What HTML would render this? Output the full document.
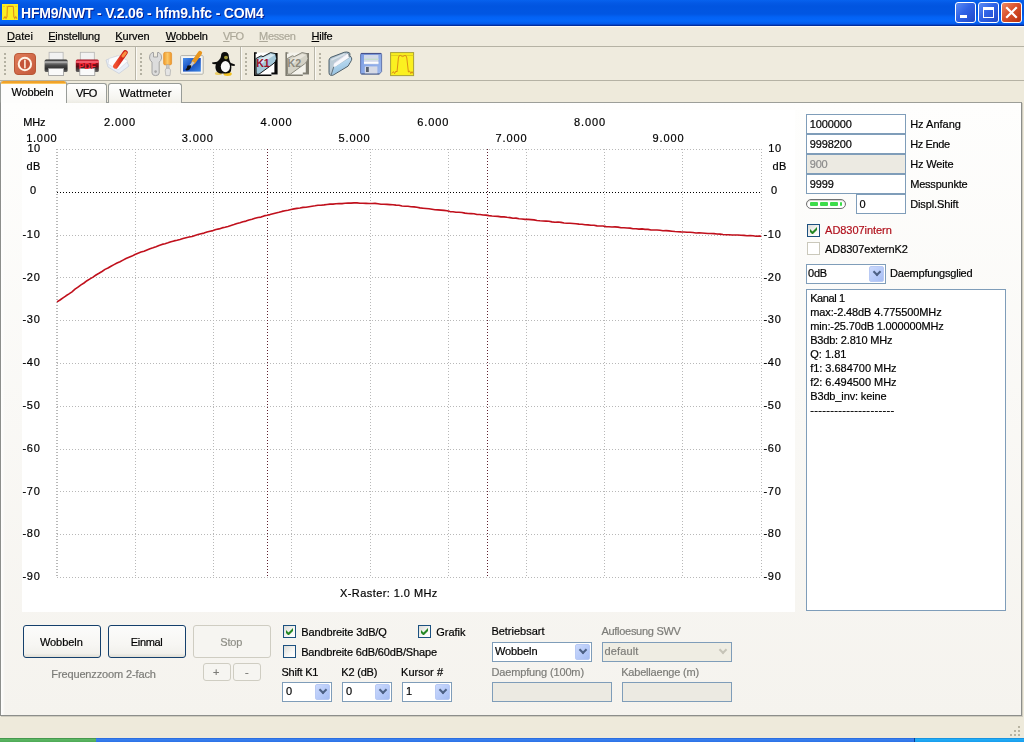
<!DOCTYPE html>
<html><head><meta charset="utf-8"><title>HFM9/NWT</title>
<style>
html,body{margin:0;padding:0;}
body{width:1024px;height:742px;overflow:hidden;position:relative;background:#EEEADB;font:11px "Liberation Sans",sans-serif;color:#000;}
.a{position:absolute;box-sizing:border-box;}
.t{position:absolute;white-space:pre;font:11px/13px "Liberation Sans",sans-serif;color:#000;-webkit-text-stroke:0.2px currentColor;}
.t.tt{font:bold 14px/16px "Liberation Sans",sans-serif;color:#fff;text-shadow:1px 1px 0 #0A1E8C;}
.t.tt{-webkit-text-stroke:0;}
.t.dis{color:#ACA899;}
.t.dis2{color:#8A8A8A;}
.t.dis3{color:#7C7C78;}
.t.dis4{color:#8E8E86;}
.t.red{color:#B0101C;}
.t u{text-decoration:underline;text-underline-offset:1px;}
#title{left:0;top:0;width:1024px;height:26px;background:linear-gradient(#0762EE 0,#0459E5 3px,#0155E0 6px,#0156E2 14px,#0362F4 17px,#0467FA 21px,#045CEC 23.5px,#0348D0 24.5px,#022E9C 25.5px,#022E9C 26px);}
.wb{border:1px solid #fff;border-radius:3px;width:21px;height:21px;top:2px;background:linear-gradient(135deg,#5C8CF4 0,#2F62E6 45%,#1F48C8 100%);}
.wb.cl{background:linear-gradient(135deg,#EE8A66 0,#D9512B 45%,#B8300E 100%);}
#menu{left:0;top:26px;width:1024px;height:20px;background:#EFEBDE;border-top:1px solid #FCFBF8;}
#tbar{left:0;top:46px;width:1024px;height:35px;background:#EFEBDE;border-top:1px solid #B5B2A4;border-bottom:1px solid #B5B2A4;}
.sep{width:2px;top:47px;height:33px;border-left:1px solid #B9B6A8;border-right:1px solid #FBFAF6;}
.hd{width:2px;top:53px;height:24px;background:repeating-linear-gradient(#B4B1A2 0,#B4B1A2 2px,transparent 2px,transparent 4px);}
#pane{left:0;top:102px;width:1022px;height:614px;border:1px solid #8C8E8B;border-top-color:#9C9E98;background:linear-gradient(#FEFEFD 0,#F5F3EE 100%);box-shadow:1px 1px 0 #CFCCBF;}
#pane:before{content:"";position:absolute;left:0;top:0;width:4px;height:100%;background:linear-gradient(90deg,rgba(255,255,255,.9),rgba(255,255,255,.5) 50%,rgba(255,255,255,0));}
.tab{top:83px;height:20px;border:1px solid #989C98;border-bottom:none;border-radius:3px 3px 0 0;background:linear-gradient(#FFFFFF,#F5F4EF 80%,#ECEBE3);}
#tabsel{left:0;top:81px;width:67px;height:21px;border:1px solid #989C98;border-top:none;border-bottom:none;border-radius:3px 3px 0 0;background:#FDFDFC;overflow:hidden;}
#tabsel:before{content:"";position:absolute;left:-1px;right:-1px;top:0;height:2px;background:#F0A22A;border-bottom:1px solid #FBC761;border-radius:3px 3px 0 0;}
#chart{left:22px;top:110px;width:773px;height:502px;background:#fff;}
.in{border:1px solid #7F9DB9;background:#fff;height:20px;}
.in.d{background:#ECEAE2;}
.cb{border:1px solid #7F9DB9;background:#fff;height:20px;}
.cb i{position:absolute;right:1px;top:1px;width:15px;height:16px;border-radius:2px;background:linear-gradient(135deg,#CBD9FC,#B5C9F8 60%,#A6BDF3);border:1px solid #B9CAF4;box-sizing:border-box;}
.cb i:after{content:"";position:absolute;left:3.5px;top:1.5px;width:4px;height:4px;border-right:2px solid #4D6185;border-bottom:2px solid #4D6185;transform:rotate(45deg);transform-origin:center;box-sizing:content-box;}
.cb.d{background:#EFEDE3;}
.cb.d i{background:transparent;border-color:transparent;}
.cb.d i:after{border-color:#C6C4B8;}
.ck{width:13px;height:13px;border:1px solid #1C5180;background:linear-gradient(135deg,#DCDCD7,#F7F7F5 60%,#fff);}
.ck.d{border-color:#CAC8BB;background:#fff;}
.btn{border:1px solid #15406C;border-radius:3px;background:linear-gradient(#FCFCFB 0,#F7F6F3 60%,#F2F1EC 88%,#E0DED5 100%);}
.btn.d{border-color:#CFCDC2;background:#F6F5F1;}
</style></head><body>
<div id="title" class="a"></div>
<!-- app icon -->
<svg class="a" style="left:2px;top:4px" width="16" height="16" viewBox="0 0 16 16"><rect width="16" height="16" fill="#FBEE22"/><path d="M1 2.4 H15" stroke="#E8C81C" stroke-width="0.8" stroke-dasharray="2 1"/><path d="M1.5 14.6 L3 12.8 L4 14.4 L5 12.6 L5.4 3 L6.4 2.4 L10.4 2.4 L11.4 3 L11.8 12.6 L12.8 14.4 L13.8 12.8 L15 14.6" fill="none" stroke="#E0921A" stroke-width="1.1"/></svg>
<div class="a wb" style="left:955px"><div class="a" style="left:4px;top:12px;width:7px;height:3px;background:#fff"></div></div>
<div class="a wb" style="left:978px"><div class="a" style="left:4px;top:4px;width:11px;height:11px;border:1px solid #fff;border-top-width:3px"></div></div>
<div class="a wb cl" style="left:1001px"><svg class="a" style="left:0;top:0" width="19" height="19"><path d="M5 5 L14 14 M14 5 L5 14" stroke="#fff" stroke-width="2.2" stroke-linecap="square"/></svg></div>
<div id="menu" class="a"></div>
<div id="tbar" class="a"></div>
<div class="a hd" style="left:4px"></div>
<div class="a sep" style="left:135px"></div><div class="a hd" style="left:140px"></div>
<div class="a sep" style="left:240px"></div><div class="a hd" style="left:245px"></div>
<div class="a sep" style="left:314px"></div><div class="a hd" style="left:319px"></div>
<svg class="a" style="left:0;top:0" width="440" height="82" viewBox="0 0 440 82">
<defs>
<linearGradient id="gpw" x1="0" y1="0" x2="1" y2="1"><stop offset="0" stop-color="#E07C5A"/><stop offset="1" stop-color="#C4583A"/></linearGradient>
<linearGradient id="gpr" x1="0" y1="0" x2="0" y2="1"><stop offset="0" stop-color="#2A2A2A"/><stop offset="0.25" stop-color="#8A8A8A"/><stop offset="0.45" stop-color="#4A4A4A"/><stop offset="0.75" stop-color="#2E2E2E"/><stop offset="1" stop-color="#6A6A6A"/></linearGradient>
<linearGradient id="gpp" x1="0" y1="0" x2="0" y2="1"><stop offset="0" stop-color="#A01020"/><stop offset="0.16" stop-color="#E83848"/><stop offset="0.3" stop-color="#98101C"/><stop offset="0.55" stop-color="#5C0C14"/><stop offset="0.75" stop-color="#443434"/><stop offset="1" stop-color="#686868"/></linearGradient>
<linearGradient id="gor" x1="0" y1="0" x2="1" y2="0"><stop offset="0" stop-color="#EE9A2A"/><stop offset="0.5" stop-color="#FBC868"/><stop offset="1" stop-color="#EE9426"/></linearGradient>
<linearGradient id="gbl" x1="0" y1="0" x2="1" y2="1"><stop offset="0" stop-color="#4A90EC"/><stop offset="0.5" stop-color="#1A50C0"/><stop offset="1" stop-color="#3C86E4"/></linearGradient>
<linearGradient id="gfo" x1="0" y1="0" x2="1" y2="1"><stop offset="0" stop-color="#C8DCEC"/><stop offset="0.45" stop-color="#F4F8FC"/><stop offset="1" stop-color="#90B8D8"/></linearGradient>
<linearGradient id="gfl" x1="0" y1="0" x2="1" y2="1"><stop offset="0" stop-color="#7C9CE4"/><stop offset="1" stop-color="#9CB8EC"/></linearGradient>
<linearGradient id="gpen" x1="0" y1="0" x2="1" y2="0"><stop offset="0" stop-color="#F05030"/><stop offset="1" stop-color="#C81010"/></linearGradient>
<linearGradient id="gfo2" x1="0" y1="0" x2="0.3" y2="1"><stop offset="0" stop-color="#E4F0FA"/><stop offset="0.4" stop-color="#B4D6EE"/><stop offset="1" stop-color="#94C0E0"/></linearGradient>
</defs>
<rect x="14.5" y="53.5" width="21" height="21" rx="3.5" fill="url(#gpw)" stroke="#B85838" stroke-width="1"/>
<circle cx="24.9" cy="64" r="5" fill="#C4543A"/>
<circle cx="24.9" cy="64" r="6.2" fill="none" stroke="#FFF4E8" stroke-width="2"/>
<path d="M24.9 60.3 V67.8" stroke="#FDEEDD" stroke-width="1.6" stroke-linecap="round"/>
<rect x="49.1" y="52.3" width="14" height="8" fill="#F2F2F2" stroke="#B4B4B4" stroke-width="0.8"/><rect x="44.6" y="59.5" width="23" height="12.5" rx="1.5" fill="url(#gpr)"/><rect x="48.6" y="68.5" width="15" height="7" fill="#FAFAFA" stroke="#9A9A9A" stroke-width="0.8"/>
<rect x="45" y="61.2" width="22.2" height="1.6" fill="#B8B8B8" opacity="0.8"/>
<rect x="80.3" y="52.3" width="14" height="8" fill="#F2F2F2" stroke="#B4B4B4" stroke-width="0.8"/><rect x="75.8" y="59.5" width="23" height="12.5" rx="1.5" fill="url(#gpp)"/><rect x="79.8" y="68.5" width="15" height="7" fill="#FAFAFA" stroke="#9A9A9A" stroke-width="0.8"/>
<rect x="76.2" y="61.2" width="22.2" height="1.8" fill="#FF7080" opacity="0.75"/>
<text x="78.6" y="68.6" font-family="Liberation Sans, sans-serif" font-weight="bold" font-size="9" fill="#F82838" textLength="17" lengthAdjust="spacingAndGlyphs">PDF</text>
<path d="M106 60 L117 56 L127 62 L129 66 L119 73.5 L108 67 Z" fill="#E8EEF6" stroke="#C4CCD8" stroke-width="0.7"/>
<path d="M109 58.5 L119 55.5 L128 61 L118 70 L108 64 Z" fill="#FBFCFE" stroke="#D0D4DC" stroke-width="0.6"/>
<path d="M125.2 52.6 L115.6 66.2" stroke="url(#gpen)" stroke-width="5" stroke-linecap="round"/>
<path d="M125.4 52.8 L123 56" stroke="#F89040" stroke-width="3" stroke-linecap="round"/>
<path d="M152 52.5 L153.5 52.5 L153.5 57 L157.5 57 L157.5 52.5 L159 52.5 Q162 54.5 161.6 58 Q161 61 159.2 62 L159.2 73 Q159 75.6 155.6 75.6 Q152.2 75.6 152 73 L152 62 Q150 61 149.5 58 Q149.2 54.5 152 52.5 Z" fill="#DCDCDC" stroke="#9C9C9C" stroke-width="0.9"/>
<circle cx="155.6" cy="71.6" r="1.3" fill="#A8A8A8"/>
<rect x="163.6" y="52.3" width="8" height="12.6" rx="1.6" fill="url(#gor)" stroke="#E08A20" stroke-width="0.6"/>
<rect x="166.3" y="64.8" width="2.8" height="4" fill="#C8C8C8" stroke="#A8A8A8" stroke-width="0.5"/>
<path d="M165.2 70 L166.4 68.2 L169.2 68.2 L170.6 70 L170 75.6 L165.8 75.6 Z" fill="#E4E4E4" stroke="#ACACAC" stroke-width="0.7"/>
<rect x="180.6" y="55.6" width="22.6" height="18.6" rx="1" fill="#F6F6F4" stroke="#ACACA4" stroke-width="0.9"/>
<rect x="183" y="58" width="17.8" height="13.6" fill="url(#gbl)"/>
<path d="M200 53 L193.6 62" stroke="#E8961E" stroke-width="4.2" stroke-linecap="round"/>
<path d="M193.6 62 L190.2 66.4" stroke="#C8C8C8" stroke-width="2.6"/>
<path d="M190.6 66 Q189.6 69.6 186.4 69.6 Q188 68.4 188 66.4 Z" fill="#101010" stroke="#101010" stroke-width="1.6" stroke-linejoin="round"/>
<ellipse cx="227.6" cy="74" rx="4.2" ry="1.9" fill="#F0C020"/>
<ellipse cx="218.5" cy="73.4" rx="3.6" ry="1.6" fill="#E8C038" opacity="0.7"/>
<path d="M224.8 52 Q228.8 52 228.9 57 Q229 60 230.6 63 Q232 67 231 71 Q230 73.5 226 73.5 L220 73.5 Q215.4 72 215.4 67 Q215.6 62.6 219 60 Q221 58 221 56 Q221 52 224.8 52 Z" fill="#0C0C0C"/>
<path d="M212 62.6 L219 61.4 L218 64.6 L212.6 64 Z" fill="#0C0C0C"/>
<path d="M229.6 62.6 L235 64.4 L234.6 66 L229.8 65.4 Z" fill="#0C0C0C"/>
<ellipse cx="225.4" cy="66.6" rx="4.6" ry="5.6" fill="#FBFBFB"/>
<ellipse cx="226" cy="57.6" rx="2" ry="1.8" fill="#A09838"/>
<rect x="254.6" y="52.6" width="22.6" height="22.4" fill="#FFFFFF"/><path d="M254.8 52.3 V75.3 H271.4" fill="none" stroke="#080808" stroke-width="1.6"/><path d="M254.8 53 H257" stroke="#080808" stroke-width="1.2"/><path d="M274.4 53 H277.6 V74.4 H271.4 V72.4 H274.4 Z" fill="#080808"/><path d="M255.8 58.6 L261 55.8 L263 56.6 L270.6 52.6 L275.6 53.6 L276.6 58.6 Q276 62 273 64 L259 74.2 L256.2 74.2 Z" fill="#A4C8D8" stroke="#080808" stroke-width="0.9" stroke-linejoin="round"/><path d="M257 60 L271 54 L274.6 55 L258 66 Z" fill="#E4F0F6" opacity="0.8"/><text x="256.2" y="67.4" font-family="Liberation Sans, sans-serif" font-weight="bold" font-size="11.5" fill="#9C1028" textLength="13.6" lengthAdjust="spacingAndGlyphs">K1</text>
<rect x="286.0" y="52.6" width="22.6" height="22.4" fill="#F4F3EC"/><path d="M286.2 52.3 V75.3 H302.79999999999995" fill="none" stroke="#807E72" stroke-width="1.6"/><path d="M286.2 53 H288.4" stroke="#807E72" stroke-width="1.2"/><path d="M305.79999999999995 53 H309.0 V74.4 H302.79999999999995 V72.4 H305.79999999999995 Z" fill="#807E72"/><path d="M287.2 58.6 L292.4 55.8 L294.4 56.6 L302.0 52.6 L307.0 53.6 L308.0 58.6 Q307.4 62 304.4 64 L290.4 74.2 L287.59999999999997 74.2 Z" fill="#D4D2C6" stroke="#807E72" stroke-width="0.9" stroke-linejoin="round"/><path d="M288.4 60 L302.4 54 L306.0 55 L289.4 66 Z" fill="#ECEAE0" opacity="0.8"/><text x="287.59999999999997" y="67.4" font-family="Liberation Sans, sans-serif" font-weight="bold" font-size="11.5" fill="#8C8A7E" textLength="13.6" lengthAdjust="spacingAndGlyphs">K2</text>
<path d="M330.6 75.3 Q329 75 329 72.6 L329 60.2 Q329 58.4 331 57.3 L344.2 52.3 Q346.6 51.6 349.2 52.6 Q350.4 53.6 349.8 55.4 L351.4 57.6 Q352.2 59 351.2 60.8 L348 66.2 L333 75.2 Z" fill="#A9BECC" stroke="#4E606C" stroke-width="1" stroke-linejoin="round"/>
<path d="M330 73 L330 60.4 Q330 59 331.6 58.2 L344.6 53.2 L347 53.2 L333.6 64.6 L331.6 73.6 Z" fill="#BCCBD6"/>
<path d="M331.4 60 L344.6 54" stroke="#D8E2EA" stroke-width="1.4"/>
<path d="M332.8 68.4 L334 63.4 L347 53.8 L349 54.2 L349 57.4 L335 67 Z" fill="#F8F8FC"/>
<path d="M334 63.6 L347.2 54" stroke="#E0DCEC" stroke-width="0.8"/>
<path d="M331.8 74.6 L334.2 67.4 L350.6 57.6 Q351.6 59 350.6 60.6 L347.6 65.6 L333 74.6 Z" fill="url(#gfo2)"/>
<path d="M331.2 74.8 L333.8 66.6" stroke="#5A6C78" stroke-width="0.9"/>
<path d="M347.6 53.4 Q349.4 54 349.2 57" fill="none" stroke="#5A6C78" stroke-width="0.8"/>
<path d="M361.6 53.4 H380.6 Q381.6 53.4 381.6 54.4 V71.6 L379.4 74 H361.6 Q360.6 74 360.6 73 V54.4 Q360.6 53.4 361.6 53.4 Z" fill="url(#gfl)" stroke="#5A6EA8" stroke-width="0.9"/>
<path d="M361 53.6 H381.2" stroke="#46508A" stroke-width="1.1"/>
<path d="M361.4 74 H379.4" stroke="#4E5E80" stroke-width="1"/>
<rect x="364" y="55" width="14.4" height="9.2" fill="#D2D9E8"/>
<rect x="364" y="58.6" width="14.4" height="1.4" fill="#C6DCCC"/>
<rect x="364" y="61.8" width="14.4" height="1.9" fill="#FDFDFF"/>
<rect x="364.8" y="66.4" width="12.6" height="7" fill="#D6DAE6"/>
<rect x="366" y="67" width="2.8" height="5" fill="#5A6270"/>
<rect x="390.6" y="52.6" width="23" height="23" fill="#FBF020" stroke="#A8A038" stroke-width="1"/>
<path d="M391 55.4 H413.4" stroke="#DCCC20" stroke-width="1"/>
<path d="M392 73.4 L393.4 71.6 L394.6 73.6 L396 71 L397 72 L398.4 58 Q398.8 55.2 400.2 55.4 L402.6 56.6 L405 55.4 Q406.4 55.2 406.8 58 L408.4 72 L409.6 71 L410.8 73.6 L412 71.6 L413 73.6" fill="none" stroke="#D88414" stroke-width="0.9"/>
</svg>
<!-- tabs -->
<div id="pane" class="a"></div>
<div class="a tab" style="left:66px;width:41px"></div>
<div class="a tab" style="left:108px;width:74px"></div>
<div id="tabsel" class="a"></div><div class="a" style="left:1px;top:102px;width:65px;height:1px;background:#FDFDFC"></div>
<div id="chart" class="a"></div>
<svg class="a" style="left:0;top:0" width="1024" height="742" viewBox="0 0 1024 742">
<g shape-rendering="crispEdges" fill="none" stroke-width="1" stroke-dasharray="1 2">
<path d="M57 149.5 H762" stroke="#B8B8B8"/>
<path d="M57 192.5 H762" stroke="#000"/>
<path d="M57 235.5 H762" stroke="#B8B8B8"/>
<path d="M57 277.5 H762" stroke="#B8B8B8"/>
<path d="M57 320.5 H762" stroke="#B8B8B8"/>
<path d="M57 363.5 H762" stroke="#B8B8B8"/>
<path d="M57 406.5 H762" stroke="#B8B8B8"/>
<path d="M57 449.5 H762" stroke="#B8B8B8"/>
<path d="M57 491.5 H762" stroke="#B8B8B8"/>
<path d="M57 534.5 H762" stroke="#B8B8B8"/>
<path d="M57 577.5 H762" stroke="#B8B8B8"/>
<path d="M57.5 149 V578" stroke="#B8B8B8"/>
<path d="M135.5 149 V578" stroke="#B8B8B8"/>
<path d="M213.5 149 V578" stroke="#B8B8B8"/>
<path d="M291.5 149 V578" stroke="#B8B8B8"/>
<path d="M370.5 149 V578" stroke="#B8B8B8"/>
<path d="M448.5 149 V578" stroke="#B8B8B8"/>
<path d="M526.5 149 V578" stroke="#B8B8B8"/>
<path d="M604.5 149 V578" stroke="#B8B8B8"/>
<path d="M682.5 149 V578" stroke="#B8B8B8"/>
<path d="M56.5 149 V578" stroke="#B8B8B8"/>
<path d="M761.5 149 V578" stroke="#B8B8B8"/>
<path d="M267.5 149 V578" stroke="#602030"/>
<path d="M487.5 149 V578" stroke="#602030"/>
</g>
<path d="M57.0 301.9 L60.0 300.0 L63.0 297.8 L66.0 295.8 L69.0 293.9 L72.0 291.8 L75.0 289.2 L78.0 287.1 L81.0 284.9 L84.0 283.0 L87.0 280.7 L90.0 278.9 L93.0 277.1 L96.0 275.0 L99.0 273.3 L102.0 271.5 L105.0 269.4 L108.0 268.0 L111.0 266.2 L114.0 264.6 L117.0 263.0 L120.0 261.7 L123.0 260.1 L126.0 258.5 L129.0 257.3 L132.0 256.1 L135.0 254.5 L138.0 253.2 L141.0 252.1 L144.0 251.2 L147.0 250.0 L150.0 248.8 L153.0 247.8 L156.0 246.7 L159.0 245.5 L162.0 244.4 L165.0 243.7 L168.0 242.8 L171.0 241.8 L174.0 240.9 L177.0 240.2 L180.0 239.4 L183.0 238.5 L186.0 237.7 L189.0 237.0 L192.0 236.5 L195.0 235.5 L198.0 234.6 L201.0 233.8 L204.0 233.1 L207.0 232.1 L210.0 231.3 L213.0 230.6 L216.0 229.5 L219.0 228.9 L222.0 227.9 L225.0 227.2 L228.0 226.4 L231.0 225.5 L234.0 224.6 L237.0 223.6 L240.0 222.8 L243.0 221.8 L246.0 221.1 L249.0 220.1 L252.0 219.3 L255.0 218.3 L258.0 217.5 L261.0 217.1 L264.0 215.9 L267.0 215.3 L270.0 214.6 L273.0 213.8 L276.0 213.0 L279.0 212.3 L282.0 211.4 L285.0 210.7 L288.0 210.2 L291.0 209.5 L294.0 208.9 L297.0 208.4 L300.0 208.0 L303.0 207.4 L306.0 207.3 L309.0 206.7 L312.0 206.2 L315.0 205.8 L318.0 205.2 L321.0 205.2 L324.0 204.9 L327.0 204.5 L330.0 204.1 L333.0 204.1 L336.0 203.8 L339.0 203.6 L342.0 203.6 L345.0 203.3 L348.0 203.1 L351.0 203.1 L354.0 202.9 L357.0 202.9 L360.0 203.2 L363.0 203.3 L366.0 203.4 L369.0 203.5 L372.0 203.5 L375.0 203.4 L378.0 203.8 L381.0 204.2 L384.0 204.3 L387.0 204.4 L390.0 204.6 L393.0 204.8 L396.0 205.1 L399.0 205.3 L402.0 206.0 L405.0 206.2 L408.0 206.3 L411.0 206.7 L414.0 206.9 L417.0 207.3 L420.0 207.9 L423.0 208.2 L426.0 208.5 L429.0 208.8 L432.0 209.3 L435.0 209.8 L438.0 209.9 L441.0 210.1 L444.0 210.4 L447.0 210.8 L450.0 211.6 L453.0 211.7 L456.0 212.2 L459.0 212.2 L462.0 212.5 L465.0 213.1 L468.0 213.5 L471.0 213.6 L474.0 213.7 L477.0 214.5 L480.0 214.5 L483.0 215.0 L486.0 215.1 L489.0 215.6 L492.0 216.0 L495.0 216.3 L498.0 216.4 L501.0 216.9 L504.0 216.9 L507.0 217.3 L510.0 217.6 L513.0 218.2 L516.0 218.1 L519.0 218.8 L522.0 219.0 L525.0 219.4 L528.0 219.4 L531.0 219.6 L534.0 219.9 L537.0 220.5 L540.0 220.8 L543.0 221.0 L546.0 221.1 L549.0 221.3 L552.0 221.9 L555.0 222.2 L558.0 222.0 L561.0 222.4 L564.0 223.0 L567.0 223.2 L570.0 223.2 L573.0 223.5 L576.0 223.8 L579.0 224.1 L582.0 224.2 L585.0 224.8 L588.0 224.9 L591.0 225.3 L594.0 225.2 L597.0 225.9 L600.0 226.0 L603.0 226.0 L606.0 226.6 L609.0 226.7 L612.0 227.0 L615.0 226.9 L618.0 227.1 L621.0 227.7 L624.0 227.7 L627.0 228.0 L630.0 228.1 L633.0 228.7 L636.0 228.7 L639.0 229.1 L642.0 228.9 L645.0 229.4 L648.0 229.4 L651.0 230.0 L654.0 230.0 L657.0 230.0 L660.0 230.2 L663.0 230.7 L666.0 230.6 L669.0 230.9 L672.0 231.2 L675.0 231.5 L678.0 231.7 L681.0 231.9 L684.0 232.0 L687.0 232.3 L690.0 232.3 L693.0 232.5 L696.0 233.0 L699.0 232.8 L702.0 233.0 L705.0 233.2 L708.0 233.5 L711.0 233.5 L714.0 233.6 L717.0 234.0 L720.0 234.1 L723.0 234.5 L726.0 234.7 L729.0 234.8 L732.0 235.0 L735.0 235.0 L738.0 235.0 L741.0 235.3 L744.0 235.4 L747.0 235.7 L750.0 235.6 L753.0 235.8 L756.0 236.2 L759.0 236.1 L761.3 236.3" fill="none" stroke="#C0101C" stroke-width="1.6" stroke-linejoin="round"/>
</svg>
<!-- right panel -->
<div class="a in" style="left:806px;top:114px;width:100px"></div>
<div class="a in" style="left:806px;top:134px;width:100px"></div>
<div class="a in d" style="left:806px;top:154px;width:100px"></div>
<div class="a in" style="left:806px;top:174px;width:100px"></div>
<div class="a in" style="left:856px;top:194px;width:50px"></div>
<div class="a" style="left:806px;top:199px;width:40px;height:10px;border:1px solid #707070;border-radius:5px;background:#fff;box-shadow:inset 0 1px 1px #D0D0C8"></div>
<div class="a" style="left:810px;top:202px;width:8px;height:4px;background:#3DDC4A;border-radius:1px"></div>
<div class="a" style="left:820px;top:202px;width:8px;height:4px;background:#3DDC4A;border-radius:1px"></div>
<div class="a" style="left:830px;top:202px;width:8px;height:4px;background:#3DDC4A;border-radius:1px"></div>
<div class="a" style="left:840px;top:202px;width:2px;height:4px;background:#3DDC4A;border-radius:1px"></div>
<div class="a ck on" style="left:807px;top:224px"><svg class="a" style="left:2px;top:2px" width="7" height="7" viewBox="0 0 7 7"><path d="M0 2 L0 5 L2.5 7.5 L7 3 L7 0 L2.5 4.5 Z" fill="#258825"/></svg></div>
<div class="a ck d" style="left:807px;top:242px"></div>
<div class="a cb" style="left:806px;top:264px;width:80px"><i></i></div>
<div class="a" style="left:806px;top:289px;width:200px;height:322px;border:1px solid #7F9DB9;background:#fff"></div>
<!-- bottom -->
<div class="a btn" style="left:23px;top:625px;width:78px;height:33px"></div>
<div class="a btn" style="left:108px;top:625px;width:78px;height:33px"></div>
<div class="a btn d" style="left:193px;top:625px;width:78px;height:33px"></div>
<div class="a btn d" style="left:203px;top:663px;width:28px;height:18px"></div>
<div class="a btn d" style="left:233px;top:663px;width:28px;height:18px"></div>
<div class="a ck on" style="left:283px;top:625px"><svg class="a" style="left:2px;top:2px" width="7" height="7" viewBox="0 0 7 7"><path d="M0 2 L0 5 L2.5 7.5 L7 3 L7 0 L2.5 4.5 Z" fill="#258825"/></svg></div>
<div class="a ck" style="left:283px;top:645px"></div>
<div class="a ck on" style="left:418px;top:625px"><svg class="a" style="left:2px;top:2px" width="7" height="7" viewBox="0 0 7 7"><path d="M0 2 L0 5 L2.5 7.5 L7 3 L7 0 L2.5 4.5 Z" fill="#258825"/></svg></div>
<div class="a cb" style="left:282px;top:682px;width:50px"><i></i></div>
<div class="a cb" style="left:342px;top:682px;width:50px"><i></i></div>
<div class="a cb" style="left:402px;top:682px;width:50px"><i></i></div>
<div class="a cb" style="left:492px;top:642px;width:100px"><i></i></div>
<div class="a cb d" style="left:602px;top:642px;width:130px"><i></i></div>
<div class="a in d" style="left:492px;top:682px;width:120px"></div>
<div class="a in d" style="left:622px;top:682px;width:110px"></div>
<!-- resize grip -->
<svg class="a" style="left:1008px;top:724px" width="14" height="14"><g fill="#B8B4A2"><rect x="10" y="2" width="2" height="2"/><rect x="6" y="6" width="2" height="2"/><rect x="10" y="6" width="2" height="2"/><rect x="2" y="10" width="2" height="2"/><rect x="6" y="10" width="2" height="2"/><rect x="10" y="10" width="2" height="2"/></g></svg>
<!-- taskbar -->
<div class="a" style="left:0;top:738px;width:1024px;height:4px;background:linear-gradient(#1D5BD0,#3A82F0 1px,#2C72E6 4px)"></div>
<div class="a" style="left:0;top:738px;width:96px;height:4px;background:linear-gradient(#2E7A36,#5FB866 1px,#4DAA56 4px)"></div>
<div class="a" style="left:914px;top:738px;width:110px;height:4px;background:linear-gradient(#1078C8,#22B0F8 1px,#189CEC 4px);border-left:1px solid #0C3C90"></div>
<div id="txt" style="position:absolute;left:0;top:0;width:1024px;height:742px;will-change:transform">
<span class="t tt" style="left:21.0px;top:5px;letter-spacing:-0.19px">HFM9/NWT - V.2.06 - hfm9.hfc - COM4</span>
<span class="t" style="left:7.1px;top:30px;letter-spacing:0.02px"><u>D</u>atei</span>
<span class="t" style="left:48.2px;top:30px;letter-spacing:-0.20px"><u>E</u>instellung</span>
<span class="t" style="left:115.3px;top:30px;letter-spacing:-0.11px"><u>K</u>urven</span>
<span class="t" style="left:165.7px;top:30px;letter-spacing:-0.19px"><u>W</u>obbeln</span>
<span class="t dis" style="left:223.1px;top:30px;letter-spacing:-0.88px"><u>V</u>FO</span>
<span class="t dis" style="left:259.1px;top:30px;letter-spacing:-0.36px"><u>M</u>essen</span>
<span class="t" style="left:311.5px;top:30px;letter-spacing:-0.22px"><u>H</u>ilfe</span>
<span class="t" style="left:11.6px;top:86px;letter-spacing:-0.19px">Wobbeln</span>
<span class="t" style="left:76.1px;top:87px;letter-spacing:-0.74px">VFO</span>
<span class="t" style="left:119.5px;top:87px;letter-spacing:0.19px">Wattmeter</span>
<span class="t" style="left:23.3px;top:116px;letter-spacing:-0.17px">MHz</span>
<span class="t" style="left:104.0px;top:116px;letter-spacing:0.89px">2.000</span>
<span class="t" style="left:260.5px;top:116px;letter-spacing:0.89px">4.000</span>
<span class="t" style="left:417.3px;top:116px;letter-spacing:0.89px">6.000</span>
<span class="t" style="left:574.1px;top:116px;letter-spacing:0.89px">8.000</span>
<span class="t" style="left:26.2px;top:132px;letter-spacing:0.75px">1.000</span>
<span class="t" style="left:181.7px;top:132px;letter-spacing:0.89px">3.000</span>
<span class="t" style="left:338.5px;top:132px;letter-spacing:0.89px">5.000</span>
<span class="t" style="left:495.5px;top:132px;letter-spacing:0.89px">7.000</span>
<span class="t" style="left:652.5px;top:132px;letter-spacing:0.89px">9.000</span>
<span class="t" style="left:27.5px;top:142px;letter-spacing:0.27px">10</span>
<span class="t" style="left:26.5px;top:160px;letter-spacing:0.27px">dB</span>
<span class="t" style="left:29.9px;top:184px;letter-spacing:1.08px">0</span>
<span class="t" style="left:768.3px;top:142px;letter-spacing:0.48px">10</span>
<span class="t" style="left:772.5px;top:160px;letter-spacing:0.47px">dB</span>
<span class="t" style="left:771.0px;top:184px;letter-spacing:1.38px">0</span>
<span class="t" style="left:22.5px;top:228px;letter-spacing:0.70px">-10</span>
<span class="t" style="left:763.5px;top:228px;letter-spacing:0.70px">-10</span>
<span class="t" style="left:22.5px;top:271px;letter-spacing:0.70px">-20</span>
<span class="t" style="left:763.5px;top:271px;letter-spacing:0.70px">-20</span>
<span class="t" style="left:22.5px;top:313px;letter-spacing:0.70px">-30</span>
<span class="t" style="left:763.5px;top:313px;letter-spacing:0.70px">-30</span>
<span class="t" style="left:22.5px;top:356px;letter-spacing:0.70px">-40</span>
<span class="t" style="left:763.5px;top:356px;letter-spacing:0.70px">-40</span>
<span class="t" style="left:22.5px;top:399px;letter-spacing:0.70px">-50</span>
<span class="t" style="left:763.5px;top:399px;letter-spacing:0.70px">-50</span>
<span class="t" style="left:22.5px;top:442px;letter-spacing:0.70px">-60</span>
<span class="t" style="left:763.5px;top:442px;letter-spacing:0.70px">-60</span>
<span class="t" style="left:22.5px;top:485px;letter-spacing:0.70px">-70</span>
<span class="t" style="left:763.5px;top:485px;letter-spacing:0.70px">-70</span>
<span class="t" style="left:22.5px;top:527px;letter-spacing:0.70px">-80</span>
<span class="t" style="left:763.5px;top:527px;letter-spacing:0.70px">-80</span>
<span class="t" style="left:22.5px;top:570px;letter-spacing:0.70px">-90</span>
<span class="t" style="left:763.5px;top:570px;letter-spacing:0.70px">-90</span>
<span class="t" style="left:340.0px;top:587px;letter-spacing:0.43px">X-Raster: 1.0 MHz</span>
<span class="t" style="left:809.8px;top:118px;letter-spacing:-0.12px">1000000</span>
<span class="t" style="left:809.8px;top:138px;letter-spacing:-0.12px">9998200</span>
<span class="t dis2" style="left:809.8px;top:158px;letter-spacing:-0.22px">900</span>
<span class="t" style="left:809.8px;top:178px;letter-spacing:-0.15px">9999</span>
<span class="t" style="left:859.4px;top:198px;letter-spacing:0.18px">0</span>
<span class="t" style="left:910.2px;top:118px;letter-spacing:-0.01px">Hz Anfang</span>
<span class="t" style="left:910.2px;top:138px;letter-spacing:-0.37px">Hz Ende</span>
<span class="t" style="left:910.2px;top:158px;letter-spacing:-0.14px">Hz Weite</span>
<span class="t" style="left:910.2px;top:178px;letter-spacing:-0.20px">Messpunkte</span>
<span class="t" style="left:910.2px;top:198px;letter-spacing:-0.11px">Displ.Shift</span>
<span class="t red" style="left:825.1px;top:224px;letter-spacing:-0.05px">AD8307intern</span>
<span class="t" style="left:825.1px;top:243px;letter-spacing:-0.08px">AD8307externK2</span>
<span class="t" style="left:808.1px;top:267px;letter-spacing:-0.29px">0dB</span>
<span class="t" style="left:890.1px;top:267px;letter-spacing:-0.22px">Daempfungsglied</span>
<span class="t" style="left:810.2px;top:292px;letter-spacing:-0.40px">Kanal 1</span>
<span class="t" style="left:810.2px;top:306px;letter-spacing:-0.11px">max:-2.48dB 4.775500MHz</span>
<span class="t" style="left:810.2px;top:320px;letter-spacing:-0.15px">min:-25.70dB 1.000000MHz</span>
<span class="t" style="left:810.2px;top:334px;letter-spacing:-0.19px">B3db: 2.810 MHz</span>
<span class="t" style="left:810.2px;top:348px;letter-spacing:0.03px">Q: 1.81</span>
<span class="t" style="left:810.2px;top:362px;letter-spacing:-0.03px">f1: 3.684700 MHz</span>
<span class="t" style="left:810.2px;top:376px;letter-spacing:-0.03px">f2: 6.494500 MHz</span>
<span class="t" style="left:810.2px;top:390px;letter-spacing:-0.13px">B3db_inv: keine</span>
<span class="t" style="left:810.2px;top:404px;letter-spacing:0.35px">---------------------</span>
<span class="t" style="left:39.9px;top:636px;letter-spacing:-0.05px">Wobbeln</span>
<span class="t" style="left:130.8px;top:636px;letter-spacing:-0.35px">Einmal</span>
<span class="t dis4" style="left:220.2px;top:636px;letter-spacing:-0.14px">Stop</span>
<span class="t dis3" style="left:51.3px;top:668px;letter-spacing:-0.13px">Frequenzzoom 2-fach</span>
<span class="t dis3" style="left:213.0px;top:666px;letter-spacing:0.56px">+</span>
<span class="t dis3" style="left:245.0px;top:666px;letter-spacing:0.33px">-</span>
<span class="t" style="left:301.2px;top:626px;letter-spacing:-0.12px">Bandbreite 3dB/Q</span>
<span class="t" style="left:301.2px;top:646px;letter-spacing:-0.15px">Bandbreite 6dB/60dB/Shape</span>
<span class="t" style="left:436.3px;top:626px;letter-spacing:-0.02px">Grafik</span>
<span class="t" style="left:281.4px;top:666px;letter-spacing:-0.22px">Shift K1</span>
<span class="t" style="left:341.3px;top:666px;letter-spacing:-0.21px">K2 (dB)</span>
<span class="t" style="left:401.0px;top:666px;letter-spacing:0.07px">Kursor #</span>
<span class="t" style="left:285.9px;top:685px;letter-spacing:0.00px">0</span>
<span class="t" style="left:345.9px;top:685px;letter-spacing:0.00px">0</span>
<span class="t" style="left:405.9px;top:685px;letter-spacing:0.00px">1</span>
<span class="t" style="left:491.4px;top:625px;letter-spacing:-0.01px">Betriebsart</span>
<span class="t" style="left:494.9px;top:645px;letter-spacing:-0.09px">Wobbeln</span>
<span class="t dis3" style="left:601.4px;top:625px;letter-spacing:-0.28px">Aufloesung SWV</span>
<span class="t dis3" style="left:604.5px;top:645px;letter-spacing:0.14px">default</span>
<span class="t dis3" style="left:491.4px;top:666px;letter-spacing:-0.14px">Daempfung (100m)</span>
<span class="t dis3" style="left:621.2px;top:666px;letter-spacing:-0.20px">Kabellaenge (m)</span>
</div>
</body></html>
